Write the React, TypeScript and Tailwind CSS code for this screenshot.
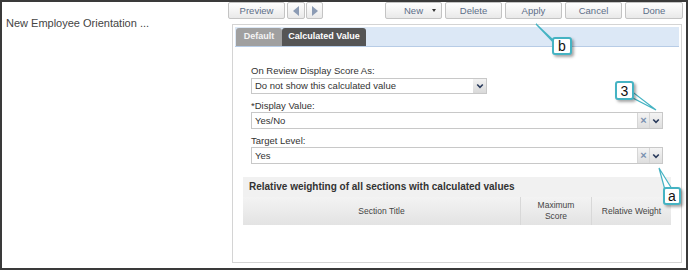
import React from "react";

const arial = "font-['Liberation_Sans',Arial,sans-serif]";

const ToolButton = ({ label, className = "", caret = false }: { label: string; className?: string; caret?: boolean }) => (
  <button
    className={`relative h-[17px] w-[57px] rounded-[2px] border border-[#c4c4c4] bg-gradient-to-b from-white to-[#e9e9e9] text-[9.5px] leading-none text-[#5d6e88] ${className}`}
  >
    {label}
    {caret && <span className="absolute right-[5px] top-[6px] h-0 w-0 border-x-[2.5px] border-t-[3px] border-x-transparent border-t-[#333]" />}
  </button>
);

const Chevron = () => (
  <svg width="8" height="6" viewBox="0 0 8 6">
    <path d="M1.2 1.5 L4 4.3 L6.8 1.5" fill="none" stroke="#2a3b5c" strokeWidth="1.6" />
  </svg>
);

const ComboInput = ({ value }: { value: string }) => (
  <div className="flex h-[17px] w-full border border-[#c8c8c8] bg-white">
    <div className="flex-1 pl-[3px] text-[9.5px] leading-[15px] text-[#333]">{value}</div>
    <div className="flex w-[12px] items-center justify-center border-l border-[#d6d6d6] bg-gradient-to-b from-[#f4f4f4] to-[#dedede] text-[11px] font-bold leading-none text-[#7890b0]">
      ×
    </div>
    <div className="flex w-[13px] items-center justify-center border-l border-[#d6d6d6] bg-gradient-to-b from-[#f4f4f4] to-[#dedede]">
      <Chevron />
    </div>
  </div>
);

const Callout = ({ text, className }: { text: string; className: string }) => (
  <div
    className={`absolute flex items-center justify-center rounded-[3px] border-2 border-[#45b3c3] bg-white text-[14px] leading-none text-[#111] shadow-[2px_2px_3px_rgba(0,0,0,0.35)] ${className}`}
  >
    {text}
  </div>
);

export default function App() {
  return (
    <div className={`relative flex h-[270px] w-[688px] border-2 border-[#3a3a3a] bg-white ${arial}`}>
      {/* left list */}
      <div className="w-[226px] shrink-0 pl-[4px] pt-[15px]">
        <p className="text-[11px] leading-[13px] text-[#444]">New Employee Orientation ...</p>
      </div>

      {/* right column */}
      <div className="flex flex-1 flex-col">
        <div className="flex justify-between pr-[3px]">
          <div className="flex gap-[2px]">
            <ToolButton label="Preview" />
            <div className="flex gap-[1px]">
              <button className="flex h-[17px] w-[18px] items-center justify-center rounded-[2px] border border-[#c4c4c4] bg-gradient-to-b from-white to-[#e9e9e9]">
                <span className="h-0 w-0 border-y-[5px] border-r-[6px] border-y-transparent border-r-[#8b9bb4]" />
              </button>
              <button className="flex h-[17px] w-[17px] items-center justify-center rounded-[2px] border border-[#c4c4c4] bg-gradient-to-b from-white to-[#e9e9e9]">
                <span className="h-0 w-0 border-y-[5px] border-l-[6px] border-y-transparent border-l-[#8b9bb4]" />
              </button>
            </div>
          </div>
          <div className="flex gap-[3px]">
            <ToolButton label="New" caret />
            <ToolButton label="Delete" />
            <ToolButton label="Apply" />
            <ToolButton label="Cancel" />
            <ToolButton label="Done" className="w-[58px]" />
          </div>
        </div>

        <div className="mx-[4px] mb-[5px] mt-[5px] flex flex-1 flex-col border border-[#d4d4d4] p-[2px] pb-0">
          <div className="flex h-[20px] items-end border-b border-[#b7cce6] bg-[#dce8f6] pl-[1px]">
            <div className="flex h-[18px] w-[46px] items-center justify-center rounded-t-[3px] bg-[#a0a0a0] text-[9px] font-bold text-[#f4f4f4]">
              Default
            </div>
            <div className="flex h-[18px] w-[84px] items-center justify-center rounded-t-[3px] bg-[#555] text-[9px] font-bold text-white">
              Calculated Value
            </div>
          </div>

          <div className="px-[8px] pt-[17px]">
            <div className="px-[8px] text-[9.5px] text-[#333]">
              <div className="leading-[14px]">On Review Display Score As:</div>
              <div className="flex h-[16px] w-[236px] border border-[#c8c8c8] bg-white">
                <div className="flex-1 pl-[3px] leading-[14px]">Do not show this calculated value</div>
                <div className="flex w-[13px] items-center justify-center bg-gradient-to-b from-[#f2f2f2] to-[#d9d9d9]">
                  <Chevron />
                </div>
              </div>
              <div className="mt-[6px] leading-[12px]">*Display Value:</div>
              <ComboInput value="Yes/No" />
              <div className="mt-[6px] leading-[12px]">Target Level:</div>
              <ComboInput value="Yes" />
            </div>

            <div className="mt-[13px]">
              <div className="h-[20px] bg-[#f1f1f1] pl-[6px] text-[10px] font-bold leading-[20px] text-[#333]">
                Relative weighting of all sections with calculated values
              </div>
              <div className="flex h-[28px] bg-gradient-to-b from-[#f3f3f3] to-[#e3e3e3] text-[8.5px] text-[#444]">
                <div className="flex w-[277px] items-center justify-center">Section Title</div>
                <div className="flex w-[71px] items-center justify-center border-l border-[#d8d8d8] text-center leading-[11px]">
                  Maximum
                  <br />
                  Score
                </div>
                <div className="flex flex-1 items-center justify-center border-l border-[#d8d8d8]">Relative Weight</div>
              </div>
            </div>
          </div>
        </div>
      </div>

      {/* callouts */}
      <svg className="pointer-events-none absolute left-[-2px] top-[-2px]" width="688" height="270">
        <polygon points="536,24 553,40 556,45" fill="white" stroke="#45b3c3" strokeWidth="1.2" />
        <polygon points="630,90 631,97 656,110" fill="white" stroke="#45b3c3" strokeWidth="1.2" />
        <polygon points="659,168 665,190 672,189" fill="white" stroke="#45b3c3" strokeWidth="1.2" />
      </svg>
      <Callout text="b" className="left-[550px] top-[35px] h-[18px] w-[20px]" />
      <Callout text="3" className="left-[613px] top-[79px] h-[19px] w-[19px]" />
      <Callout text="a" className="left-[661px] top-[185px] h-[18px] w-[18px]" />
    </div>
  );
}
